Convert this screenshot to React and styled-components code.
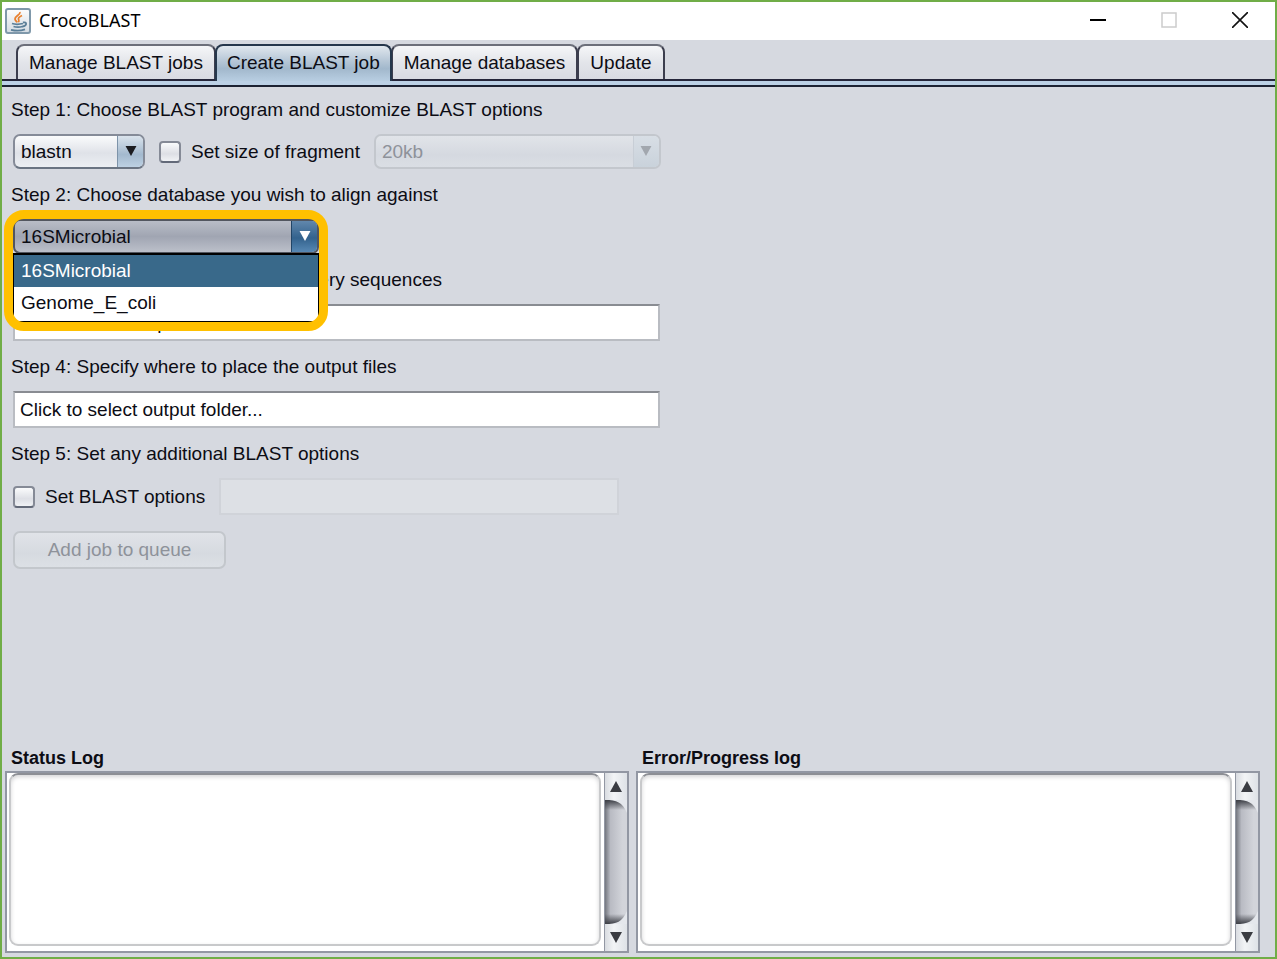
import React, { useState } from "react";
import styled, { createGlobalStyle, css } from "styled-components";

const GlobalStyle = createGlobalStyle`
  * {
    box-sizing: border-box;
  }
  body {
    margin: 0;
    background: #d6d9e0;
    color: #0c0c14;
  }
  body, button, input, select, textarea {
    font-family: "Liberation Sans", Arial, sans-serif;
    font-size: 19px;
  }
`;

const tabs = [
  "Manage BLAST jobs",
  "Create BLAST job",
  "Manage databases",
  "Update",
];
const databases = ["16SMicrobial", "Genome_E_coli"];

const JavaIcon = () => (
  <svg width="26" height="26" viewBox="0 0 26 26" fill="none">
    <defs>
      <linearGradient id="tile" x1="0" y1="0" x2="0" y2="1">
        <stop offset="0" stopColor="#fdfdfd" />
        <stop offset="1" stopColor="#d3dbe2" />
      </linearGradient>
    </defs>
    <rect x="1" y="1" width="24" height="24" rx="2" fill="url(#tile)" stroke="#7f98aa" strokeWidth="2" />
    <path d="M15 4c.5 3-5 4-5 7 0 1.500 1.500 2 2 3.500M17 7.500c-2 1-4 2-3.500 3.700.4 1 1 1.700-.2 3" stroke="#e8812f" strokeWidth="1.800" />
    <path d="M7 15.500c3 1 7 1 11 0M8.500 18.500c3 .8 6 .8 9 0M18 14.500c4.500-1 4 3.500-.5 4M6 21.800c4 1 10 1 14-.5" stroke="#5b7f98" strokeWidth="1.800" />
  </svg>
);

const Arrow = ({ up, size = 12, height = 11 }) => (
  <svg width={size} height={height} viewBox="0 0 12 11" fill="currentColor">
    <path d={up ? "M6 0L12 11H0z" : "M0 0H12L6 11z"} />
  </svg>
);

const Combo = ({ id, label, options, ...rest }) => (
  <ComboBox {...rest}>
    <ComboSelect id={id} aria-label={label} disabled={rest.$disabled}>
      {options.map((option) => (
        <option key={option}>{option}</option>
      ))}
    </ComboSelect>
    <ComboArrow {...rest}>
      <Arrow height={10} />
    </ComboArrow>
  </ComboBox>
);

const LogPanel = ({ id, title }) => (
  <LogColumn>
    <LogTitle htmlFor={id}>{title}</LogTitle>
    <LogFrame>
      <LogText id={id} readOnly />
      <ScrollBar>
        <ScrollButton aria-label="Scroll up">
          <Arrow up />
        </ScrollButton>
        <ScrollTrack>
          <svg width="100%" height="14" viewBox="0 0 22 14" preserveAspectRatio="none">
            <path d="M0 0C12 0 17 2 22 13V0z" fill="#e4e7ec" />
          </svg>
          <svg width="100%" height="14" viewBox="0 0 22 14" preserveAspectRatio="none">
            <path d="M0 14C12 14 17 12 22 1V14z" fill="#e4e7ec" />
          </svg>
        </ScrollTrack>
        <ScrollButton aria-label="Scroll down">
          <Arrow />
        </ScrollButton>
      </ScrollBar>
    </LogFrame>
  </LogColumn>
);

export default function App() {
  const [tab, setTab] = useState(tabs[1]);
  const [database, setDatabase] = useState(databases[0]);

  return (
    <Window>
      <GlobalStyle />
      <TitleBar>
        <JavaIcon />
        <Title>CrocoBLAST</Title>
        <WindowButton aria-label="Minimize">
          <svg width="16" height="16" viewBox="0 0 16 16" stroke="#000" strokeWidth="2">
            <path d="M0 8H16" />
          </svg>
        </WindowButton>
        <WindowButton aria-label="Maximize" disabled>
          <svg width="16" height="16" viewBox="0 0 16 16" fill="none" stroke="#ccc" strokeWidth="1.500">
            <rect x="1" y="1" width="14" height="14" />
          </svg>
        </WindowButton>
        <WindowButton aria-label="Close">
          <svg width="16" height="16" viewBox="0 0 16 16" stroke="#111" strokeWidth="1.600">
            <path d="M0 0L16 16M16 0L0 16" />
          </svg>
        </WindowButton>
      </TitleBar>

      <TabStrip role="tablist">
        {tabs.map((name) => (
          <Tab
            key={name}
            role="tab"
            aria-selected={name === tab}
            $selected={name === tab}
            onClick={() => setTab(name)}
          >
            {name}
          </Tab>
        ))}
      </TabStrip>
      <TabRule />

      <Form onSubmit={(e) => e.preventDefault()}>
        <StepLabel as="label" htmlFor="program">
          Step 1: Choose BLAST program and customize BLAST options
        </StepLabel>
        <Row>
          <Combo id="program" options={["blastn"]} $width="132px" />
          <CheckLabel>
            <CheckBox type="checkbox" />
            Set size of fragment
          </CheckLabel>
          <Combo label="Fragment size" options={["20kb"]} $width="287px" $disabled />
        </Row>

        <StepLabel as="label" htmlFor="database">
          Step 2: Choose database you wish to align against
        </StepLabel>
        <DatabasePicker>
          <ComboBox $open>
            <ComboSelect
              id="database"
              value={database}
              onChange={(e) => setDatabase(e.target.value)}
            >
              {databases.map((name) => (
                <option key={name}>{name}</option>
              ))}
            </ComboSelect>
            <ComboArrow $open>
              <Arrow height={10} />
            </ComboArrow>
          </ComboBox>
          <Popup role="listbox" aria-label="Databases">
            {databases.map((name) => (
              <PopupItem
                key={name}
                role="option"
                aria-selected={name === database}
                $selected={name === database}
                onClick={() => setDatabase(name)}
              >
                {name}
              </PopupItem>
            ))}
          </Popup>
          <Highlight />
        </DatabasePicker>

        <StepLabel as="label" htmlFor="query">
          Step 3: Specify the file containing query sequences
        </StepLabel>
        <TextField id="query" readOnly defaultValue="Click to select input file..." />

        <StepLabel as="label" htmlFor="output">
          Step 4: Specify where to place the output files
        </StepLabel>
        <TextField id="output" readOnly defaultValue="Click to select output folder..." />

        <StepLabel>Step 5: Set any additional BLAST options</StepLabel>
        <OptionsRow>
          <CheckLabel>
            <CheckBox type="checkbox" />
            Set BLAST options
          </CheckLabel>
          <TextField aria-label="BLAST options" disabled />
        </OptionsRow>
        <SubmitButton disabled>Add job to queue</SubmitButton>
      </Form>

      <Logs>
        <LogPanel id="status" title="Status Log" />
        <LogPanel id="errors" title="Error/Progress log" />
      </Logs>
    </Window>
  );
}

const Window = styled.div`
  min-height: 100vh;
  display: flex;
  flex-direction: column;
  border: 2px solid #70ad47;
`;

const TitleBar = styled.header`
  height: 38px;
  display: flex;
  align-items: center;
  padding-left: 3px;
  background: #fff;
`;

const Title = styled.h1`
  flex: 1;
  margin: 0 0 0 8px;
  padding-bottom: 2px;
  font: 18px "Noto Sans", sans-serif;
  color: #000;
`;

const WindowButton = styled.button`
  width: 71px;
  height: 36px;
  display: flex;
  align-items: center;
  justify-content: center;
  padding: 0 0 2px;
  border: 0;
  background: none;
`;

const TabStrip = styled.nav`
  display: flex;
  padding: 4px 14px 0;
  border-bottom: 2px solid #25263a;
`;

const Tab = styled.button`
  height: 35px;
  padding: 0 11px;
  margin-right: -1px;
  border: 2px solid #3c3e4e;
  border-top-color: #6c6f7a;
  border-bottom: 0;
  border-radius: 8px 8px 0 0;
  background: linear-gradient(#f5f6f8, #e3e5ea 50%, #d9dbe2);
  color: inherit;
  ${({ $selected }) =>
    $selected &&
    css`
      position: relative;
      height: 37px;
      margin-bottom: -2px;
      padding: 0 10px 2px;
      border-color: #25374c;
      background: linear-gradient(#e0e7ee, #b4c5d5 45%, #a2b8cc 65%, #b8cee2);
    `}
`;

const TabRule = styled.div`
  height: 6px;
  background: #bcd1e6;
  border-bottom: 2px solid #1c2233;
`;

const Form = styled.form`
  flex: 1;
  display: flex;
  flex-direction: column;
  align-items: flex-start;
  padding: 11px 11px 16px;
`;

const StepLabel = styled.p`
  margin: 14px 0 12px -2px;
  line-height: 24px;
  &:first-child {
    margin-top: 0;
  }
`;

const Row = styled.div`
  display: flex;
  align-items: center;
  gap: 14px;
`;

const ComboBox = styled.div`
  width: ${({ $width }) => $width || "100%"};
  height: 35px;
  display: flex;
  overflow: hidden;
  border: 2px solid #858b98;
  border-bottom-color: #6a7482;
  border-radius: 7px;
  background: linear-gradient(#fafbfc, #dfe2e8 55%, #eceff3);
  ${({ $open }) =>
    $open &&
    css`
      border-color: #52565f;
      background: linear-gradient(#b9bdc7, #a0a5b2 50%, #bcc0ca);
    `}
  ${({ $disabled }) =>
    $disabled &&
    css`
      border-color: #c3c7cd;
      background: linear-gradient(#e1e4e9, #d5d9e0 60%, #dadee4);
      color: #8e929a;
    `}
`;

const ComboSelect = styled.select`
  flex: 1;
  min-width: 0;
  appearance: none;
  border: 0;
  padding: 0 6px;
  background: none;
  color: inherit;
  opacity: 1;
`;

const ComboArrow = styled.span`
  width: 26px;
  display: flex;
  align-items: center;
  justify-content: center;
  padding-bottom: 2px;
  border-left: 1px solid #7d93a9;
  background: linear-gradient(#dae3ec, #a3b9ce 60%, #bdd1e3);
  color: #1b1c20;
  ${({ $open }) =>
    $open &&
    css`
      border-color: #224567;
      background: linear-gradient(#6187ac, #33628d 55%, #5788b4);
      color: #fff;
    `}
  ${({ $disabled }) =>
    $disabled &&
    css`
      border-color: #c8ced6;
      background: linear-gradient(#d8dee5, #c9d2db);
      color: #a2a7ae;
    `}
`;

const CheckLabel = styled.label`
  display: flex;
  align-items: center;
  gap: 10px;
  white-space: nowrap;
`;

const CheckBox = styled.input`
  appearance: none;
  width: 22px;
  height: 22px;
  margin: 0;
  border: 2px solid #858a96;
  border-bottom-color: #626978;
  border-radius: 4px;
  background: linear-gradient(#fafbfc, #dddfe5 60%, #f0f2f5);
  &:checked {
    background: #33628d;
  }
`;

const DatabasePicker = styled.div`
  position: relative;
  width: 306px;
`;

const Popup = styled.ul`
  position: absolute;
  z-index: 1;
  top: 34px;
  left: 0;
  right: 0;
  margin: 0;
  padding: 0 0 2px;
  list-style: none;
  border: 1px solid #000;
  border-top-width: 2px;
  background: #fff;
`;

const PopupItem = styled.li`
  padding: 0 7px;
  line-height: 32px;
  background: ${({ $selected }) => ($selected ? "#39698a" : "#fff")};
  color: ${({ $selected }) => ($selected ? "#fff" : "inherit")};
`;

const Highlight = styled.div`
  position: absolute;
  z-index: 2;
  top: -9px;
  left: -9px;
  right: -9px;
  height: 121px;
  border: 9px solid #ffc000;
  border-radius: 20px;
  pointer-events: none;
`;

const TextField = styled.input`
  width: 647px;
  max-width: 100%;
  height: 37px;
  padding: 0 5px;
  border: 2px solid #b9bcc2;
  border-top-color: #898c92;
  border-radius: 0;
  background: #fff;
  color: inherit;
  &:disabled {
    width: 400px;
    border-color: #d0d3d9;
    background: #dde0e5;
  }
`;

const OptionsRow = styled(Row)`
  margin-bottom: 16px;
`;

const SubmitButton = styled.button`
  height: 38px;
  width: 213px;
  border: 2px solid #c3c7cc;
  border-radius: 7px;
  background: linear-gradient(#e0e3e8, #d6dae0 60%, #dce0e5);
  color: #8e929a;
`;

const Logs = styled.section`
  display: grid;
  grid-template-columns: 1fr 1fr;
  gap: 7px;
  padding: 0 15px 4px 3px;
`;

const LogColumn = styled.div`
  display: flex;
  flex-direction: column;
`;

const LogTitle = styled.label`
  padding-left: 6px;
  font-size: 18px;
  font-weight: bold;
  line-height: 25px;
`;

const LogFrame = styled.div`
  height: 182px;
  display: flex;
  border: 2px solid #9297a3;
  background: #fff;
`;

const LogText = styled.textarea`
  flex: 1;
  min-width: 0;
  margin: 0 3px 5px 2px;
  resize: none;
  border: 2px solid #c8c9cb;
  border-top-color: #8d8f95;
  border-radius: 9px;
  box-shadow: inset 0 2px 4px #d5d5d7;
  outline: 0;
`;

const ScrollBar = styled.div`
  width: 23px;
  display: flex;
  flex-direction: column;
  border-left: 1px solid #9297a3;
`;

const ScrollButton = styled.button`
  height: 27px;
  display: flex;
  align-items: center;
  justify-content: center;
  padding: 0;
  border: 0;
  background: linear-gradient(90deg, #d9dce1, #f2f4f6 40%, #dee2e7);
  color: #3a3c42;
`;

const ScrollTrack = styled.div`
  flex: 1;
  display: flex;
  flex-direction: column;
  justify-content: space-between;
  background:
    linear-gradient(#3d3f46, #3d3f4600 10px),
    linear-gradient(0deg, #3d3f46, #3d3f4600 10px),
    linear-gradient(90deg, #74777f, #b9bbc3 25%, #d2d4da 80%);
`;
